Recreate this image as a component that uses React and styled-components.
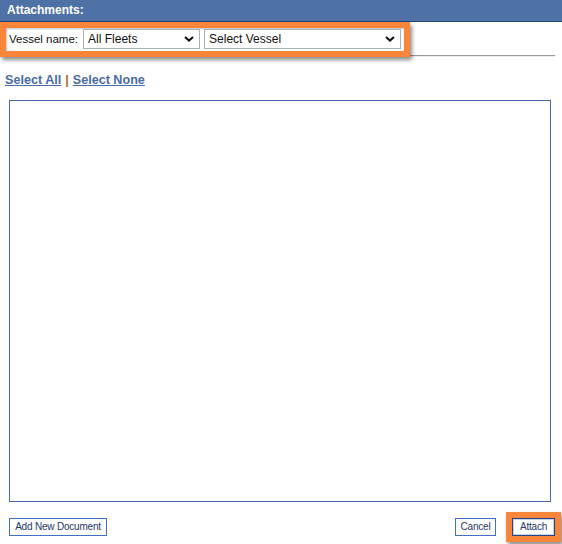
import React from 'react';
import styled, { createGlobalStyle } from 'styled-components';

const GlobalStyle = createGlobalStyle`
  body {
    margin: 0;
    background: #ffffff;
    font-family: "Liberation Sans", Arial, sans-serif;
    font-size: 12px;
    color: #111111;
  }
`;

const Page = styled.div`
  width: 562px;
  height: 544px;
  overflow: hidden;
`;

const Header = styled.div`
  height: 21px;
  line-height: 21px;
  padding-left: 7px;
  background: #4f72a6;
  border-bottom: 1px solid #24457c;
  color: #ffffff;
  font-weight: bold;
  font-size: 12px;
`;

const FilterRow = styled.div`
  display: flex;
  align-items: flex-start;
  padding-right: 7px;
`;

// orange annotation frame drawn over the screenshot
const Highlight = styled.div`
  flex: none;
  display: flex;
  align-items: center;
  border: 6px solid #f7863a;
  box-shadow: 2px 3px 4px rgba(0, 0, 0, 0.45), inset 1px 1px 2px rgba(0, 0, 0, 0.25);
  position: relative;
  z-index: 1;
  background: #ffffff;
`;

const FilterInner = styled.div`
  display: flex;
  align-items: center;
  gap: 4px;
  padding: 1px 3px 2px 3px;
`;

const Rule = styled.div`
  flex: 1;
  margin-top: 33px;
  border-top: 1px solid #9a9a9a;
  border-bottom: 1px solid #ececec;
`;

const Label = styled.span`
  font-size: 11.5px;
  color: #111111;
  white-space: nowrap;
  margin-right: 1px;
`;

const SelectBox = styled.div`
  box-sizing: border-box;
  width: ${p => p.$w}px;
  height: 20px;
  display: flex;
  align-items: center;
  justify-content: space-between;
  padding: 0 5px 0 4px;
  border: 1px solid #a7afbd;
  background: #ffffff;
  font-size: 12px;
  color: #111111;
`;

const Chevron = () => (
  <svg width="10" height="6" viewBox="0 0 10 6">
    <path d="M1 1 L5 4.6 L9 1" fill="none" stroke="#111" strokeWidth="2" />
  </svg>
);

const Body = styled.div`
  padding: 0 11px 0 9px;
`;

const Links = styled.div`
  margin: 16px 0 0 -4px;
  line-height: 15px;
  font-weight: bold;
  font-size: 12.6px;
`;

const LinkText = styled.a`
  color: #4a6ba6;
  text-decoration: underline;
  cursor: pointer;
`;

const Sep = styled.span`
  color: #a8692c;
  margin: 0 4px;
`;

const ListBox = styled.div`
  margin-top: 12px;
  height: 400px;
  border: 1px solid #4a6aa5;
  background: #ffffff;
`;

const Footer = styled.div`
  display: flex;
  align-items: center;
  justify-content: space-between;
  padding: 10px 0 0 9px;
`;

const Right = styled.div`
  display: flex;
  align-items: center;
  gap: 10px;
`;

const Button = styled.button`
  box-sizing: border-box;
  width: ${p => p.$w}px;
  height: 18px;
  padding: 0;
  background: #ffffff;
  border: 1px solid ${p => (p.$focus ? '#23428a' : '#3f6fc8')};
  box-shadow: ${p => (p.$focus ? 'inset 0 0 0 1px #c9d3e6' : 'none')};
  font-family: "Liberation Sans", Arial, sans-serif;
  font-size: 10px;
  letter-spacing: -0.2px;
  color: #22386a;
  line-height: 16px;
  cursor: pointer;
`;

const ButtonFrame = styled.div`
  display: flex;
  border: 6px solid #f7863a;
  box-shadow: 2px 3px 4px rgba(0, 0, 0, 0.45);
  margin-right: 1px;
`;

const App = () => {
  return (
    <Page>
      <GlobalStyle />
      <Header>Attachments:</Header>
      <FilterRow>
        <Highlight>
          <FilterInner>
            <Label>Vessel name:</Label>
            <SelectBox $w={117}>
              <span>All Fleets</span>
              <Chevron />
            </SelectBox>
            <SelectBox $w={197}>
              <span>Select Vessel</span>
              <Chevron />
            </SelectBox>
          </FilterInner>
        </Highlight>
        <Rule />
      </FilterRow>
      <Body>
        <Links>
          <LinkText>Select All</LinkText>
          <Sep>|</Sep>
          <LinkText>Select None</LinkText>
        </Links>
        <ListBox />
      </Body>
      <Footer>
        <Button $w={98}>Add New Document</Button>
        <Right>
          <Button $w={41}>Cancel</Button>
          <ButtonFrame>
            <Button $w={43} $focus>Attach</Button>
          </ButtonFrame>
        </Right>
      </Footer>
    </Page>
  );
};

export default App;
